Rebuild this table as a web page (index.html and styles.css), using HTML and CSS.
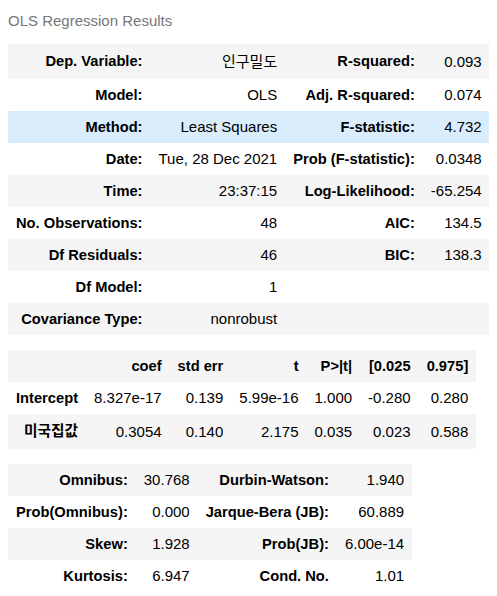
FILE: index.html
```html
<!DOCTYPE html>
<html>
<head>
<meta charset="utf-8">
<link rel="stylesheet" href="styles.css">
</head>
<body>
<div class="output">
<table class="simpletable">
<caption>OLS Regression Results</caption>
<tr class="kr"><th>Dep. Variable:</th><td>인구밀도</td><th>R-squared:</th><td>0.093</td></tr>
<tr><th>Model:</th><td>OLS</td><th>Adj. R-squared:</th><td>0.074</td></tr>
<tr class="hover"><th>Method:</th><td>Least Squares</td><th>F-statistic:</th><td>4.732</td></tr>
<tr><th>Date:</th><td>Tue, 28 Dec 2021</td><th>Prob (F-statistic):</th><td>0.0348</td></tr>
<tr><th>Time:</th><td>23:37:15</td><th>Log-Likelihood:</th><td>-65.254</td></tr>
<tr><th>No. Observations:</th><td>48</td><th>AIC:</th><td>134.5</td></tr>
<tr><th>Df Residuals:</th><td>46</td><th>BIC:</th><td>138.3</td></tr>
<tr><th>Df Model:</th><td>1</td><th></th><td></td></tr>
<tr><th>Covariance Type:</th><td>nonrobust</td><th></th><td></td></tr>
</table>
<table class="simpletable gap">
<tr><td></td><th>coef</th><th>std err</th><th>t</th><th>P&gt;|t|</th><th>[0.025</th><th>0.975]</th></tr>
<tr><th>Intercept</th><td>8.327e-17</td><td>0.139</td><td>5.99e-16</td><td>1.000</td><td>-0.280</td><td>0.280</td></tr>
<tr class="kr"><th>미국집값</th><td>0.3054</td><td>0.140</td><td>2.175</td><td>0.035</td><td>0.023</td><td>0.588</td></tr>
</table>
<table class="simpletable gap">
<tr><th>Omnibus:</th><td>30.768</td><th>Durbin-Watson:</th><td>1.940</td></tr>
<tr><th>Prob(Omnibus):</th><td>0.000</td><th>Jarque-Bera (JB):</th><td>60.889</td></tr>
<tr><th>Skew:</th><td>1.928</td><th>Prob(JB):</th><td>6.00e-14</td></tr>
<tr><th>Kurtosis:</th><td>6.947</td><th>Cond. No.</th><td>1.01</td></tr>
</table>
</div>
</body>
</html>
```
FILE: styles.css
```css
body {
  margin: 8px;
  background: #fff;
  font-family: "Liberation Sans", Arial, "Noto Sans CJK KR", sans-serif;
  font-size: 15px;
  color: #000;
}
.simpletable {
  border-collapse: collapse;
  border-spacing: 0;
}
.simpletable caption {
  caption-side: top;
  text-align: left;
  color: #777;
  font-weight: normal;
  line-height: 16px;
  padding: 5px 0 15px 0;
}
.simpletable.gap {
  margin-top: 15px;
}
.simpletable th,
.simpletable td {
  padding: 8px;
  line-height: 16px;
  text-align: right;
  vertical-align: middle;
  white-space: nowrap;
}
.simpletable th {
  font-weight: bold;
  font-size: 14.7px;
}
.simpletable tr:nth-child(odd) {
  background: #f5f5f5;
}
.simpletable tr.hover {
  background: #d9edfd;
}
.simpletable tr.kr th,
.simpletable tr.kr td {
  line-height: 19px;
}
```
